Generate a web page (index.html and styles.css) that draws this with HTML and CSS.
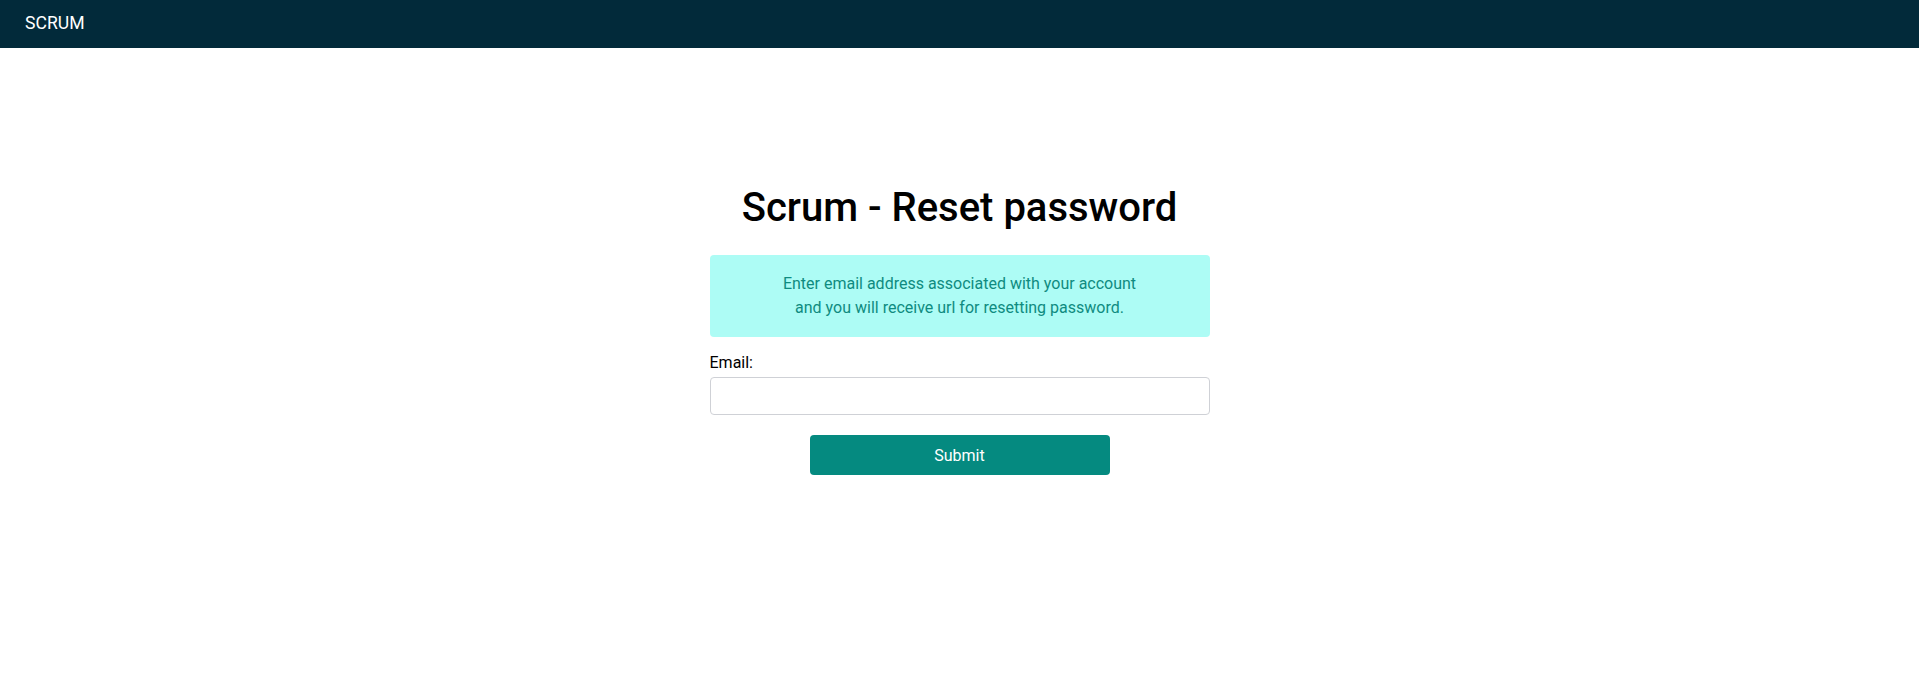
FILE: index.html
```html
<!DOCTYPE html>
<html lang="en">
<head>
<meta charset="utf-8">
<title>Scrum - Reset password</title>
<link rel="stylesheet" href="styles.css">
</head>
<body>
<header class="topbar">
  <span class="brand">SCRUM</span>
</header>
<main class="page">
  <section class="reset">
    <h1 class="title">Scrum - Reset password</h1>
    <div class="info">
      Enter email address associated with your account<br>
      and you will receive url for resetting password.
    </div>
    <form class="form">
      <label class="label" for="email">Email:</label>
      <input class="input" id="email" type="email">
      <button class="submit" type="button">Submit</button>
    </form>
  </section>
</main>
</body>
</html>
```
FILE: styles.css
```css
* { box-sizing: border-box; }
html, body { margin: 0; padding: 0; background: #ffffff; }
body { font-family: Roboto, "Liberation Sans", sans-serif; color: #000; }

.topbar {
  height: 48px;
  background: #022a3a;
  display: flex;
  align-items: center;
  padding-left: 25px;
}
.brand {
  color: #ffffff;
  font-size: 17.6px;
  line-height: 1;
}

.page {
  display: flex;
  justify-content: center;
}
.reset {
  width: 500px;
  margin-top: 136px;
  display: flex;
  flex-direction: column;
}
.title {
  margin: 0;
  font-size: 40px;
  font-weight: 500;
  line-height: 1.2;
  text-align: center;
}
.info {
  margin-top: 23px;
  background: #adfcf5;
  color: #0f8b80;
  border-radius: 4px;
  padding: 17px 16px;
  font-size: 16px;
  line-height: 24px;
  text-align: center;
}
.form {
  display: flex;
  flex-direction: column;
  margin-top: 14px;
}
.label {
  font-size: 16px;
  line-height: 24px;
  margin-bottom: 2px;
}
.input {
  height: 38px;
  border: 1px solid #cfd1d6;
  border-radius: 4px;
  font-size: 16px;
  padding: 0 10px;
  outline: none;
}
.submit {
  align-self: center;
  margin-top: 20px;
  width: 300px;
  height: 40px;
  border: none;
  border-radius: 4px;
  background: #058a80;
  color: #ffffff;
  font-family: Roboto, "Liberation Sans", sans-serif;
  font-size: 16px;
}
```
